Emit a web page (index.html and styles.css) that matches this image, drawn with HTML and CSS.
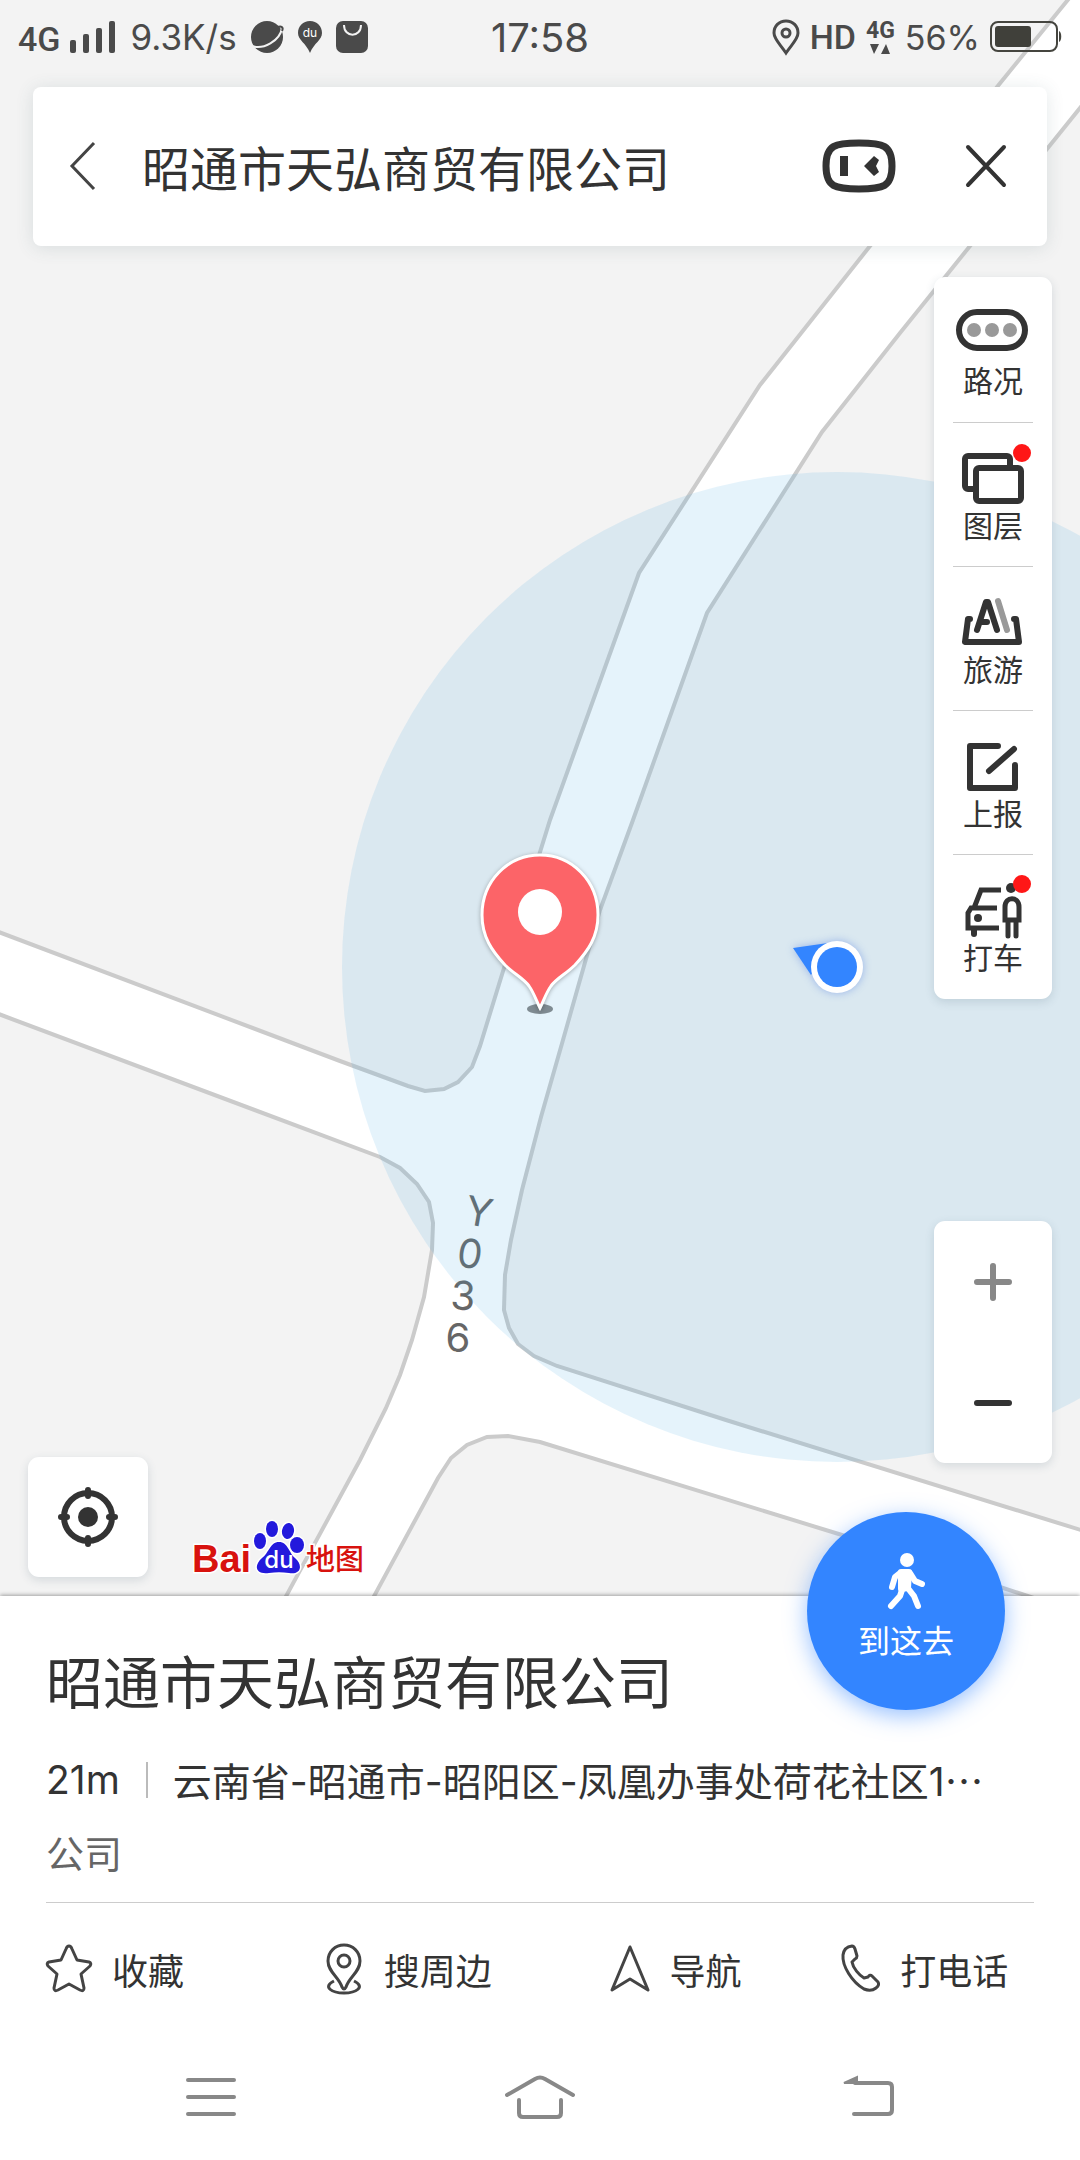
FILE: index.html
```html
<!DOCTYPE html>
<html lang="zh-CN">
<head>
  <meta charset="UTF-8">
  <meta name="viewport" content="width=device-width, initial-scale=1">
  <title>昭通市天弘商贸有限公司</title>
  <link rel="stylesheet" href="styles.css">
</head>
<body>
  <main class="map">
    <svg class="map-canvas" viewBox="0 0 1080 1596" preserveAspectRatio="xMidYMin slice" aria-hidden="true">
      <rect width="1080" height="1596" fill="#fff"/>
      <!-- land blocks between the roads -->
      <g fill="#f3f3f3" stroke="#cbcbcb" stroke-width="4">
        <path d="M-4 -4H1071L997 87L870 246L760 385L639 573L550 820L504 968L480 1046L472 1067L458 1082L444 1089L425 1091L408 1086L340 1061L-4 931Z"/>
        <path d="M1084 103L1047 149L970 246L900 333L822 432L707 613L633 820L600 910L580 980L563 1040L541 1117L522 1190L511 1240L505 1275L504 1310L509 1328L518 1344L534 1356L557 1366L726 1420L1084 1531Z"/>
        <path d="M-4 1013L380 1157L400 1168L417 1184L429 1202L433 1223L432 1250L424 1297L412 1340L400 1375L386 1408L360 1460L284 1600H-4Z"/>
        <path d="M372 1600L438 1478L451 1458L467 1445L487 1437L508 1436L540 1442L842 1535L1040 1600Z"/>
      </g>
      <g class="road-name">
        <text transform="translate(479 1212) rotate(10)" y="14">Y</text>
        <text transform="translate(470 1254) rotate(8)" y="14">0</text>
        <text transform="translate(463 1296) rotate(4)" y="14">3</text>
        <text transform="translate(458 1338)" y="14">6</text>
      </g>
      <circle cx="837" cy="967" r="495" fill="#4aabe4" fill-opacity=".14"/>

      <!-- my location -->
      <g class="my-location">
        <path d="M793 948L828 943L811 975Z" fill="#3385ff"/>
        <circle cx="837" cy="967" r="26" fill="#fff"/>
        <circle cx="837" cy="967" r="20" fill="#3385ff"/>
      </g>

      <!-- destination pin -->
      <ellipse cx="540" cy="1009" rx="13" ry="5" fill="#7f8b92"/>
      <path class="pin" d="M540 855C508 855 482 881 482 915C482 937 492 951 505 965C514 974 523 978 529 986C534 993 536 1000 540 1008C544 1000 546 993 551 986C557 978 566 974 575 965C588 951 598 937 598 915C598 881 572 855 540 855Z"/>
      <ellipse cx="540" cy="912" rx="22" ry="23" fill="#fff"/>
    </svg>

    <div class="status-bar">
      <div class="status-left">
        <span class="net">4G</span>
        <svg width="46" height="34" viewBox="0 0 46 34" fill="#4a4a4a" aria-hidden="true">
          <rect y="20" width="6" height="13" rx="2"/>
          <rect x="13" y="14" width="6" height="19" rx="2"/>
          <rect x="26" y="8" width="6" height="25" rx="2"/>
          <rect x="39" y="1" width="6" height="32" rx="2"/>
        </svg>
        <span class="speed">9.3K/s</span>
        <svg width="33" height="34" viewBox="0 0 33 34" aria-hidden="true">
          <circle cx="16" cy="17" r="16" fill="#4a4a4a"/>
          <path d="M1 26C12 30 29 21 31 8" fill="none" stroke="#f3f3f3" stroke-width="2"/>
          <path d="M27 7C30 6 33 7 31 11" fill="none" stroke="#4a4a4a" stroke-width="2"/>
        </svg>
        <svg width="24" height="34" viewBox="0 0 24 34" aria-hidden="true">
          <path d="M12 1C5 1 0 6 0 13C0 20 8 23 12 33C16 23 24 20 24 13C24 6 19 1 12 1Z" fill="#4a4a4a"/>
          <text class="tiny-du" x="12" y="17">du</text>
        </svg>
        <svg width="32" height="34" viewBox="0 0 32 34" aria-hidden="true">
          <rect y="1" width="32" height="32" rx="7" fill="#4a4a4a"/>
          <path d="M8 5C8 18 25 18 25 5" fill="none" stroke="#f3f3f3" stroke-width="2"/>
        </svg>
      </div>
      <time class="clock">17:58</time>
      <div class="status-right">
        <svg width="28" height="36" viewBox="0 0 28 36" fill="none" stroke="#4a4a4a" stroke-width="3" aria-hidden="true">
          <path d="M14 2C7 2 2 7 2 14C2 20 8 25 14 34C20 25 26 20 26 14C26 7 21 2 14 2Z"/>
          <circle cx="14" cy="14" r="4"/>
        </svg>
        <span class="hd">HD</span>
        <span class="data">4G
          <svg width="22" height="12" viewBox="0 0 22 12" fill="#4a4a4a" aria-hidden="true">
            <path d="M1 1H10L5 11ZM12 11H21L17 1Z"/>
          </svg>
        </span>
        <span class="percent">56%</span>
        <svg class="battery" width="72" height="32" viewBox="0 0 72 32" aria-hidden="true">
          <rect x="1" y="1" width="66" height="29" rx="7" fill="none" stroke="#45453f" stroke-width="2"/>
          <rect x="5" y="5" width="36" height="21" rx="3" fill="#40403a"/>
          <path d="M69 10C72 11 72 20 69 21Z" fill="#45453f"/>
        </svg>
      </div>
    </div>

    <form class="search">
      <button type="button" class="icon-button" aria-label="返回">
        <svg width="26" height="48" viewBox="0 0 26 48" fill="none" stroke="#444" stroke-width="3">
          <path d="M24 1L2 24L24 47"/>
        </svg>
      </button>
      <input class="search-input" type="text" value="昭通市天弘商贸有限公司" aria-label="搜索地点">
      <button type="button" class="icon-button" aria-label="语音助手">
        <svg width="74" height="54" viewBox="0 0 74 54">
          <path d="M37 4C61 4 70 6 70 27C70 48 61 50 37 50C13 50 4 48 4 27C4 6 13 4 37 4Z" fill="none" stroke="#333" stroke-width="7"/>
          <path d="M18 17H26V37H18ZM42 27L52 17L57 21L54 27L57 33L52 37Z" fill="#333"/>
        </svg>
      </button>
      <button type="button" class="icon-button" aria-label="关闭">
        <svg width="40" height="42" viewBox="0 0 40 42" fill="none" stroke="#333" stroke-width="4" stroke-linecap="round">
          <path d="M2 2L38 40M38 2L2 40"/>
        </svg>
      </button>
    </form>

    <div class="overlay">
      <div class="overlay-left">
        <button type="button" class="locate" aria-label="定位">
          <svg width="60" height="60" viewBox="0 0 60 60" fill="none" stroke="#333" stroke-width="6">
            <circle cx="30" cy="30" r="24"/>
            <circle cx="30" cy="30" r="10" fill="#333" stroke="none"/>
            <path d="M30 3V9M30 51V57M3 30H9M51 30H57" stroke-linecap="round"/>
          </svg>
        </button>
        <svg class="logo" width="174" height="58" viewBox="0 0 174 58" role="img" aria-label="Baidu 地图">
          <text class="logo-bai" x="-2" y="53">Bai</text>
          <g class="logo-paw">
            <ellipse cx="66" cy="22" rx="6" ry="8"/>
            <ellipse cx="78" cy="10" rx="6" ry="8"/>
            <ellipse cx="94" cy="12" rx="6" ry="8" transform="rotate(10 94 12)"/>
            <ellipse cx="103" cy="26" rx="7" ry="8"/>
            <path d="M85 23C94 23 95 34 101 39C110 47 106 56 95 54C88 53 82 53 75 54C62 56 59 47 68 39C75 34 76 23 85 23Z"/>
          </g>
          <text class="logo-du" x="85" y="49">du</text>
          <text class="logo-map" x="112" y="51">地图</text>
        </svg>
      </div>

      <div class="overlay-right">
        <div class="rail">
          <button type="button">
            <svg width="80" height="56" viewBox="0 0 80 56">
              <rect x="6" y="6" width="66" height="36" rx="18" fill="none" stroke="#333" stroke-width="6"/>
              <g fill="#999"><circle cx="21" cy="24" r="7"/><circle cx="39" cy="24" r="7"/><circle cx="57" cy="24" r="7"/></g>
            </svg>
            路况
          </button>
          <button type="button">
            <svg width="80" height="56" viewBox="0 0 80 56" stroke="#333" stroke-width="6">
              <rect x="12" y="5" width="45" height="33" rx="3" fill="none"/>
              <rect x="23" y="17" width="45" height="33" rx="3" fill="#fff"/>
              <circle cx="69" cy="2" r="9" fill="#ff1717" stroke="none"/>
            </svg>
            图层
          </button>
          <button type="button">
            <svg width="80" height="56" viewBox="0 0 80 56" fill="none" stroke="#333" stroke-width="6" stroke-linecap="round" stroke-linejoin="round">
              <path d="M45 6L54 35" stroke="#999"/>
              <path d="M24 35L33 7H35L44 35M28 27H34"/>
              <path d="M17 24H15L12 47H66L63 24H61"/>
            </svg>
            旅游
          </button>
          <button type="button">
            <svg width="80" height="56" viewBox="0 0 80 56" fill="none" stroke="#333" stroke-width="6" stroke-linecap="round" stroke-linejoin="round">
              <path d="M45 7H17V49H62V26M61 10L36 32"/>
            </svg>
            上报
          </button>
          <button type="button">
            <svg width="80" height="56" viewBox="0 0 80 56" fill="none" stroke="#333" stroke-width="5">
              <path d="M48 7H28L21 25M44 25H18L15 30V45H46"/>
              <circle cx="25" cy="35" r="4" fill="#333" stroke="none"/>
              <path d="M21 46V51" stroke-width="6" stroke-linecap="round"/>
              <circle cx="58" cy="5" r="5" fill="#333" stroke="none"/>
              <path d="M55 53V37H52V24C52 13 66 13 66 24V37H63V53M55 37H63" stroke-linecap="round"/>
              <circle cx="69" cy="1" r="9" fill="#ff1717" stroke="none"/>
            </svg>
            打车
          </button>
        </div>

        <div class="zoom">
          <button type="button" aria-label="放大">
            <svg width="40" height="40" viewBox="0 0 40 40" stroke="#888" stroke-width="6" stroke-linecap="round">
              <path d="M4 20H36M20 4V36"/>
            </svg>
          </button>
          <button type="button" aria-label="缩小">
            <svg width="40" height="40" viewBox="0 0 40 40" stroke="#333" stroke-width="6" stroke-linecap="round">
              <path d="M4 20H36"/>
            </svg>
          </button>
        </div>
      </div>
    </div>
  </main>

  <section class="sheet">
    <button type="button" class="go">
      <svg width="38" height="57" viewBox="0 0 38 57" fill="none" stroke="#fff" stroke-width="6" stroke-linecap="round" stroke-linejoin="round">
        <circle cx="20" cy="7" r="7" fill="#fff" stroke="none"/>
        <path d="M13 20L8 24L5 34M23 20L28 28L35 31"/>
        <path d="M14 19H22L21 35L14 36Z" fill="#fff"/>
        <path d="M16 34L13 43L4 53M20 34L27 43L31 53"/>
      </svg>
      到这去
    </button>
    <h1>昭通市天弘商贸有限公司</h1>
    <p class="place">
      <span class="distance">21m</span>
      <span class="address">云南省-昭通市-昭阳区-凤凰办事处荷花社区1<span class="more">…</span></span>
    </p>
    <p class="category">公司</p>
    <div class="actions">
      <button type="button">
        <svg width="46" height="50" viewBox="0 0 46 50">
          <path d="M23 2Q25 2 26 5L31 16L43 18Q46 19 44 22L35 30L38 44Q38 48 34 46L23 40L12 46Q8 48 8 44L11 30L2 22Q0 19 3 18L15 16L20 5Q21 2 23 2Z"/>
        </svg>
        收藏
      </button>
      <button type="button">
        <svg width="38" height="52" viewBox="0 0 38 52">
          <path d="M18 2C9 2 2 9 2 18C2 29 13 34 16 44Q18 48 20 44C23 34 34 29 34 18C34 9 27 2 18 2Z"/>
          <circle cx="18" cy="18" r="6"/>
          <path d="M8 38C-4 44 6 50 18 50C30 50 40 44 28 38"/>
        </svg>
        搜周边
      </button>
      <button type="button">
        <svg width="38" height="50" viewBox="0 0 38 50">
          <path d="M19 3L37 46L19 35L1 46Z"/>
        </svg>
        导航
      </button>
      <button type="button">
        <svg width="38" height="50" viewBox="0 0 38 50">
          <path d="M10 2Q12 2 13 5L15 12Q15 14 13 15L10 18C11 24 17 31 22 34L26 33Q28 30 30 32L36 38Q38 41 34 44Q29 48 22 45C10 38 0 22 1 11Q2 3 10 2Z"/>
        </svg>
        打电话
      </button>
    </div>
  </section>

  <nav class="system-nav">
    <button type="button" aria-label="菜单">
      <svg width="50" height="44" viewBox="0 0 50 44"><path d="M2 5H48M2 22H48M2 39H48"/></svg>
    </button>
    <button type="button" aria-label="主页">
      <svg width="70" height="44" viewBox="0 0 70 44"><path d="M2 20L30 4Q35 1 40 4L68 20M14 25V38Q14 42 18 42H52Q56 42 56 38V25"/></svg>
    </button>
    <button type="button" aria-label="后退">
      <svg width="52" height="44" viewBox="0 0 52 44"><path d="M12 8H45Q49 8 49 12V35Q49 39 45 39H11"/><path d="M1 8L14 2V8Z" fill="#888" stroke-width="2"/></svg>
    </button>
  </nav>
</body>
</html>
```
FILE: styles.css
```css
* {
  box-sizing: border-box;
}

body {
  margin: 0;
  min-height: 100vh;
  display: flex;
  flex-direction: column;
  background: #fff;
  color: #333;
  font-family: Inter, "Noto Sans CJK SC", sans-serif;
}

button {
  margin: 0;
  padding: 0;
  border: none;
  background: none;
  color: inherit;
  font-family: inherit;
  cursor: pointer;
}

svg {
  display: block;
  flex: none;
  overflow: visible;
}

/* map */
.map {
  position: relative;
  flex: 1;
  display: flex;
  flex-direction: column;
  overflow: hidden;
}

.map-canvas {
  position: absolute;
  top: 0;
  left: 0;
  width: 100%;
  height: 100%;
}

.map > div,
.map > form {
  position: relative;
}

.road-name {
  font-size: 40px;
  fill: #666;
  text-anchor: middle;
}

.pin {
  fill: #fc6468;
  stroke: #fff;
  stroke-width: 3px;
  filter: drop-shadow(0 1px 2px rgba(0, 0, 0, 0.3));
}

.my-location {
  filter: drop-shadow(0 0 4px rgba(51, 100, 220, 0.4));
}

/* status bar */
.status-bar {
  display: grid;
  grid-template-columns: 1fr auto 1fr;
  align-items: center;
  height: 74px;
  padding: 0 18px;
  color: #4a4a4a;
  font-size: 34px;
}

.status-left,
.status-right {
  display: flex;
  align-items: center;
  gap: 14px;
}

.status-right {
  justify-content: flex-end;
  gap: 10px;
}

.net,
.hd {
  font-family: Roboto, sans-serif;
  font-weight: 500;
}

.net {
  line-height: 30px;
  padding-top: 4px;
  margin-right: -4px;
}

.speed {
  font-size: 35px;
}

.clock {
  font-size: 40px;
}

.data {
  font-family: Roboto, sans-serif;
  font-size: 23px;
  font-weight: 700;
  line-height: 24px;
}

.data svg {
  margin: 0 auto;
}

.tiny-du {
  font-size: 12px;
  fill: #fff;
  text-anchor: middle;
}

/* search */
.search {
  display: flex;
  align-items: center;
  gap: 36px;
  height: 159px;
  margin: 13px 33px 0;
  padding: 0 41px 2px 37px;
  background: #fff;
  border-radius: 8px;
  box-shadow: 0 2px 18px rgba(60, 90, 100, 0.14);
}

.search-input {
  flex: 1;
  min-width: 0;
  padding: 0;
  border: none;
  outline: none;
  background: none;
  color: #333;
  font-family: inherit;
  font-size: 48px;
  margin-left: 10px;
}

.search .icon-button:last-child {
  margin-left: 34px;
}

/* floating controls */
.overlay {
  flex: 1;
  display: flex;
  justify-content: space-between;
  padding: 31px 28px 19px;
}

.overlay-left {
  display: flex;
  align-items: flex-end;
  gap: 46px;
}

.overlay-right {
  display: flex;
  flex-direction: column;
  justify-content: space-between;
  gap: 40px;
  padding-bottom: 114px;
}

.locate,
.rail,
.zoom {
  background: #fff;
  border-radius: 11px;
  box-shadow: 0 3px 10px rgba(50, 80, 100, 0.16);
}

.locate {
  display: flex;
  align-items: center;
  justify-content: center;
  width: 120px;
  height: 120px;
}

.rail {
  width: 118px;
  padding: 1px 19px;
}

.rail button {
  display: block;
  width: 80px;
  height: 144px;
  padding-top: 6px;
  font-size: 30px;
  line-height: 38px;
}

.rail button + button {
  border-top: 1px solid #ccc;
}

.zoom {
  display: flex;
  flex-direction: column;
}

.zoom button {
  display: flex;
  align-items: center;
  justify-content: center;
  height: 121px;
}

.logo-bai {
  font-family: "Liberation Sans", Arial, sans-serif;
  font-size: 38px;
  font-weight: 700;
}

.logo-map {
  font-family: "Noto Sans CJK SC", sans-serif;
  font-size: 29px;
  font-weight: 500;
}

.logo-bai,
.logo-map {
  fill: #d8120e;
  stroke: #fff;
  stroke-width: 3px;
  paint-order: stroke;
}

.logo-paw {
  fill: #2319dc;
  stroke: #fff;
  stroke-width: 3px;
  paint-order: stroke;
}

.logo-du {
  font-size: 24px;
  font-weight: 500;
  fill: #fff;
  text-anchor: middle;
}

/* place sheet */
.sheet {
  position: relative;
  padding: 54px 46px 0;
  background: #fff;
  box-shadow: 0 -1px 4px rgba(0, 0, 0, 0.35);
}

.go {
  position: absolute;
  top: -84px;
  right: 75px;
  display: flex;
  flex-direction: column;
  align-items: center;
  gap: 12px;
  width: 198px;
  height: 198px;
  padding-top: 41px;
  border-radius: 50%;
  background: #3385ff;
  color: #fff;
  font-size: 32px;
  line-height: 40px;
  box-shadow: 0 6px 22px rgba(51, 133, 255, 0.5);
}

h1 {
  margin: 0;
  font-size: 57px;
  font-weight: 400;
  line-height: 68px;
}

.place {
  display: flex;
  align-items: center;
  height: 52px;
  margin: 36px 0 0;
  font-size: 39px;
  line-height: 52px;
  white-space: nowrap;
}

.distance {
  padding-right: 26px;
  border-right: 2px solid #bbb;
  line-height: 36px;
}

.address {
  margin-left: 25px;
}

.more {
  font-family: "Noto Sans CJK SC", sans-serif;
}

.category {
  margin: 22px 0 0;
  color: #666;
  font-size: 38px;
  line-height: 52px;
}

.actions {
  display: grid;
  grid-template-columns: 280fr 286fr 231fr 192fr;
  margin-top: 22px;
  border-top: 1px solid #ccc;
}

.actions button {
  display: flex;
  align-items: center;
  gap: 20px;
  height: 134px;
  padding-bottom: 2px;
  font-size: 36px;
  white-space: nowrap;
}

.actions svg {
  fill: none;
  stroke: #444;
  stroke-width: 3px;
  stroke-linejoin: round;
}

/* system navigation */
.system-nav {
  position: relative;
  display: flex;
  height: 123px;
  padding: 0 47px 4px;
  background: #fff;
}

.system-nav button {
  flex: 1;
  display: flex;
  align-items: center;
  justify-content: center;
}

.system-nav svg {
  fill: none;
  stroke: #888;
  stroke-width: 4px;
  stroke-linecap: round;
}
```
